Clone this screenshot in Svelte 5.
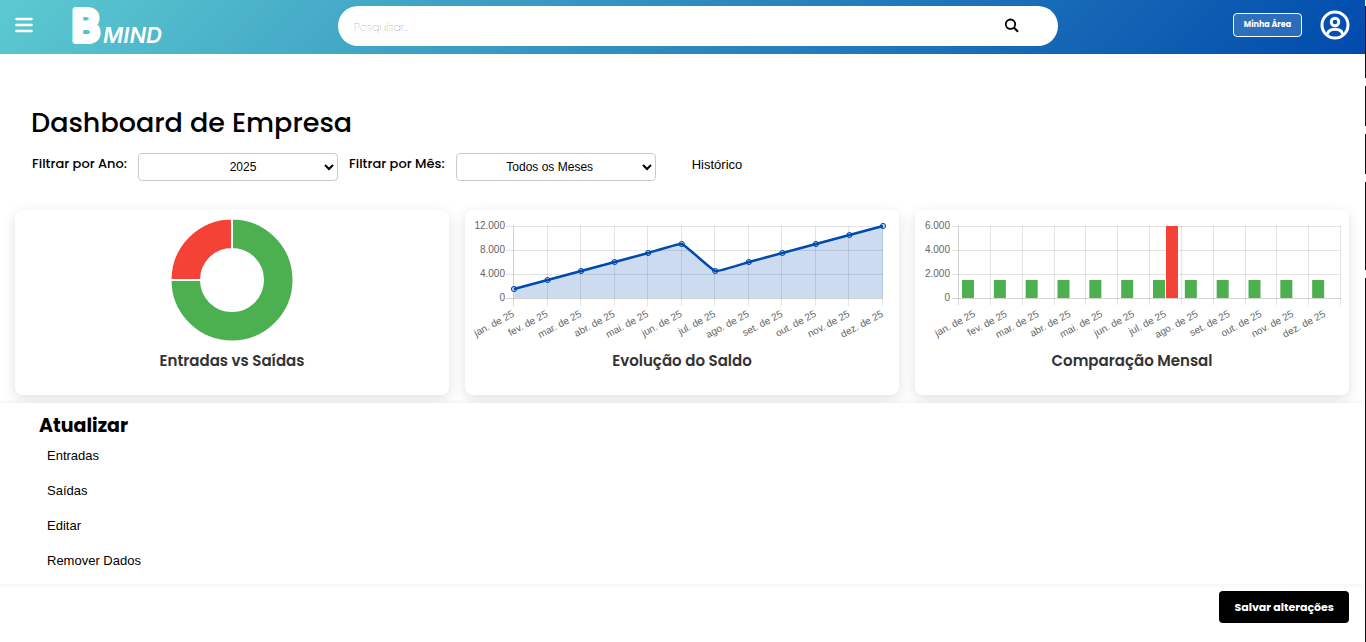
<script>
  const months = ['jan.', 'fev.', 'mar.', 'abr.', 'mai.', 'jun.', 'jul.', 'ago.', 'set.', 'out.', 'nov.', 'dez.'];
  const labels = months.map((m) => `${m} de 25`);
  const balance = [1500, 3000, 4500, 6000, 7500, 9000, 4500, 6000, 7500, 9000, 10500, 12000];
  const income = months.map(() => 1500);
  const expenses = [0, 0, 0, 0, 0, 0, 6000, 0, 0, 0, 0, 0];

  // Plot area shared by both cartesian charts, in viewBox units
  const top = 16;
  const bottom = 88;
  const rows = [16, 40, 64, 88];

  const line = { left: 49, right: 418, step: (418 - 49) / 11, ticks: ['12.000', '8.000', '4.000', '0'] };
  const bars = { left: 44, right: 426, step: (426 - 44) / 12, ticks: ['6.000', '4.000', '2.000', '0'] };

  const points = balance.map((v, i) => ({
    x: line.left + i * line.step,
    y: bottom - (v / 12000) * (bottom - top)
  }));

  function smooth(pts, tension) {
    const ctrl = pts.map((p, i) => {
      const a = pts[i - 1] ?? p;
      const b = pts[i + 1] ?? p;
      const da = Math.hypot(p.x - a.x, p.y - a.y);
      const db = Math.hypot(b.x - p.x, b.y - p.y);
      const fa = (tension * da) / (da + db);
      const fb = (tension * db) / (da + db);
      return {
        before: [p.x - fa * (b.x - a.x), p.y - fa * (b.y - a.y)],
        after: [p.x + fb * (b.x - a.x), p.y + fb * (b.y - a.y)]
      };
    });
    return pts
      .map((p, i) => (i === 0 ? `M${p.x} ${p.y}` : `C${ctrl[i - 1].after} ${ctrl[i].before} ${p.x} ${p.y}`))
      .join(' ');
  }

  const curve = smooth(points, 0.1);
  const area = `${curve} L${line.right} ${bottom} L${line.left} ${bottom} Z`;
  const barHeight = (v) => (v / 6000) * (bottom - top);

  let year = $state('2025');
  let month = $state('Todos os Meses');
</script>

<div class="page">
  <header>
    <div class="brand">
      <button class="icon menu" aria-label="Menu">
        <svg width="18" height="16" viewBox="0 0 18 16"><path d="M1.500 2h15M1.500 8h15M1.500 14h15" stroke="#fff" stroke-width="2.6" stroke-linecap="round" /></svg>
      </button>
      <svg class="logo" width="98" height="54" viewBox="0 0 98 54" role="img" aria-label="B Mind">
        <text class="logo-b" x="1" y="41">B</text>
        <text class="logo-mind" x="32" y="43">MIND</text>
      </svg>
    </div>
    <form class="search">
      <input type="text" placeholder="Pesquisar..." aria-label="Pesquisar" />
      <button type="button" class="icon" aria-label="Buscar">
        <svg width="16" height="16" viewBox="0 0 16 16" fill="none" stroke="#000"><circle cx="6.5" cy="6.2" r="4.7" stroke-width="1.8" /><path d="M10 9.700l4 4" stroke-width="2.2" /></svg>
      </button>
    </form>
    <div class="account">
      <button class="area">Minha Área</button>
      <button class="icon" aria-label="Perfil">
        <svg width="30" height="30" viewBox="0 0 30 30" fill="none" stroke="#fff" stroke-width="3">
          <circle cx="15" cy="15" r="13" />
          <circle cx="15" cy="12" r="3.8" />
          <path d="M7.300 24.500c.6-4.400 3.600-5.200 7.700-5.200s7.100.8 7.700 5.200" />
        </svg>
      </button>
    </div>
  </header>

  <main>
    <h1>Dashboard de Empresa</h1>
    <div class="filters">
      <label for="year">Filtrar por Ano:</label>
      <select id="year" class="year" bind:value={year}><option>2025</option></select>
      <label for="month">Filtrar por Mês:</label>
      <select id="month" bind:value={month}><option>Todos os Meses</option></select>
      <button class="plain history">Histórico</button>
    </div>

    <div class="cards">
      <section class="card">
        <svg class="chart" viewBox="0 0 434 138" role="img" aria-label="Entradas vs Saídas">
          <g stroke="#fff" stroke-width="2">
            <path fill="#4caf50" d="M217 8.500A61.500 61.500 0 1 1 155.500 70H186A31 31 0 1 0 217 39Z" />
            <path fill="#f44336" d="M155.500 70A61.500 61.500 0 0 1 217 8.500V39A31 31 0 0 0 186 70Z" />
          </g>
        </svg>
        <h2>Entradas vs Saídas</h2>
      </section>

      <section class="card">
        <svg class="chart" viewBox="0 0 434 138" role="img" aria-label="Evolução do Saldo">
          <g class="grid">
            {#each rows as y, i}
              <path d="M{line.left - 8} {y + 0.5}H{line.right}" class:axis={i === 3} />
              <text x="40" y={y + 3} text-anchor="end">{line.ticks[i]}</text>
            {/each}
            {#each points as p, i}
              <path d="M{Math.round(p.x) - 0.5} {top}V{bottom + 8}" class:axis={i === 0} />
              <text text-anchor="end" transform="translate({p.x + 1} 106) rotate(-28)">{labels[i]}</text>
            {/each}
          </g>
          <path d={area} fill="#004aad" fill-opacity="0.2" />
          <path d={curve} fill="none" stroke="#004aad" stroke-width="2.4" />
          {#each points as p}
            <circle cx={p.x} cy={p.y} r="2.6" fill="#004aad" fill-opacity="0.2" stroke="#004aad" />
          {/each}
        </svg>
        <h2>Evolução do Saldo</h2>
      </section>

      <section class="card">
        <svg class="chart" viewBox="0 0 434 138" role="img" aria-label="Comparação Mensal">
          <g class="grid">
            {#each rows as y, i}
              <path d="M{bars.left - 7} {y + 0.5}H{bars.right}" class:axis={i === 3} />
              <text x="35" y={y + 3} text-anchor="end">{bars.ticks[i]}</text>
            {/each}
            {#each [...labels, ''] as label, i}
              <path d="M{Math.round(bars.left + i * bars.step) - 0.5} {top}V{bottom + 7}" class:axis={i === 0} />
              <text text-anchor="end" transform="translate({bars.left + (i + 0.5) * bars.step + 1} 106) rotate(-28)">{label}</text>
            {/each}
          </g>
          {#each income as v, i}
            <rect x={bars.left + i * bars.step + 3} y={bottom - barHeight(v)} width="12" height={barHeight(v)} fill="#4caf50" />
            <rect x={bars.left + i * bars.step + 16} y={bottom - barHeight(expenses[i])} width="12" height={barHeight(expenses[i])} fill="#f44336" />
          {/each}
        </svg>
        <h2>Comparação Mensal</h2>
      </section>
    </div>
  </main>

  <section class="update">
    <h2>Atualizar</h2>
    <button class="plain">Entradas</button>
    <button class="plain">Saídas</button>
    <button class="plain">Editar</button>
    <button class="plain">Remover Dados</button>
  </section>

  <footer><button class="save">Salvar alterações</button></footer>
  <div class="edge"></div>
</div>

<style>
  :global(body) { margin: 0; background: #fff; }
  :global(*) { box-sizing: border-box; }

  .page {
    position: relative;
    min-height: 100vh;
    padding-right: 1px;
    font-family: Poppins, Inter, sans-serif;
    color: #000;
  }
  /* Segmented strip along the right border */
  .edge {
    position: absolute;
    inset: 0 0 0 auto;
    width: 1px;
    background: linear-gradient(#fff 6px, #111 6px 78px, #fff 78px 86px, #111 86px 126px, #fff 126px 134px, #111 134px 174px, #fff 174px 182px, #111 182px 270px, #fff 270px 278px, #111 278px);
  }

  button { font: inherit; color: inherit; border: 0; background: none; padding: 0; cursor: pointer; }
  svg { display: block; }

  header {
    display: grid;
    grid-template-columns: minmax(180px, 323px) minmax(200px, 720px) 1fr;
    height: 54px;
    padding: 0 15px;
    background: linear-gradient(135deg, #5ccad0, #004aad);
  }
  .brand { display: flex; gap: 38px; align-items: center; }
  .menu { padding-bottom: 4px; }
  .logo-b { font: 500 42px Inter, sans-serif; fill: #fff; stroke: #fff; stroke-width: 6; stroke-linejoin: round; }
  .logo-mind { font: italic 600 22px Inter, sans-serif; fill: #fff; }

  .search {
    display: flex;
    align-items: center;
    height: 40px;
    margin: 6px 0 0;
    padding: 0 38px 0 16px;
    border-radius: 20px;
    background: #fff;
  }
  .search input { flex: 1; min-width: 0; padding: 2px 0 0; border: 0; outline: 0; background: none; font: 100 11px Poppins, Inter, sans-serif; }
  .search input::placeholder { color: #777; }

  .account { display: flex; gap: 18px; align-items: center; justify-content: flex-end; padding-bottom: 4px; }
  .area {
    width: 69px;
    height: 24px;
    border: 1px solid #fff;
    border-radius: 4px;
    background: rgba(255, 255, 255, 0.15);
    color: #fff;
    font-size: 8px;
    font-weight: 700;
    line-height: 22px;
    white-space: nowrap;
  }

  main { padding: 48px 16px 8px 15px; }
  h1 { margin: 0 0 9px; padding-left: 16px; font-size: 27px; font-weight: 500; line-height: 42px; }
  .filters { display: flex; align-items: center; gap: 11px; height: 28px; padding-left: 17px; font-size: 13px; font-weight: 500; }
  .filters label { padding-bottom: 6px; white-space: nowrap; }
  select {
    width: 200px;
    height: 28px;
    border: 1px solid #ccc;
    border-radius: 4px;
    background: #fff;
    color: #000;
    font: 12px "Liberation Sans", Arial, sans-serif;
    text-align: center;
  }
  .year { padding-left: 22px; }
  .plain { font: 13px "Liberation Sans", Arial, sans-serif; white-space: nowrap; }
  .history { margin-left: 25px; padding-bottom: 5px; }

  .cards { display: grid; grid-template-columns: repeat(3, minmax(0, 1fr)); gap: 16px; margin-top: 29px; }
  .card { padding-bottom: 21px; border-radius: 8px; background: #fff; box-shadow: 0 4px 14px rgba(0, 0, 0, 0.12); }
  .chart { width: 100%; height: auto; }
  .card h2 { margin: 0; color: #333; font-size: 15px; font-weight: 600; line-height: 26px; text-align: center; }
  .grid path { stroke: rgba(0, 0, 0, 0.1); fill: none; }
  .grid .axis { stroke: rgba(0, 0, 0, 0.17); }
  .grid text { font: 10px "Liberation Sans", Arial, sans-serif; fill: #666; }

  .update {
    position: relative;
    display: flex;
    flex-direction: column;
    align-items: flex-start;
    padding: 10px 39px 6px;
    background: #fff;
    box-shadow: 0 0 6px rgba(0, 0, 0, 0.08);
  }
  .update h2 { margin: 0; font-size: 19px; font-weight: 700; line-height: 25px; }
  .update .plain { height: 35px; padding: 0 8px; }

  footer { display: flex; justify-content: flex-end; padding: 7px 16px 19px; }
  .save { height: 32px; padding: 0 15px; border-radius: 4px; background: #000; color: #fff; font-size: 11px; font-weight: 700; white-space: nowrap; }
</style>
